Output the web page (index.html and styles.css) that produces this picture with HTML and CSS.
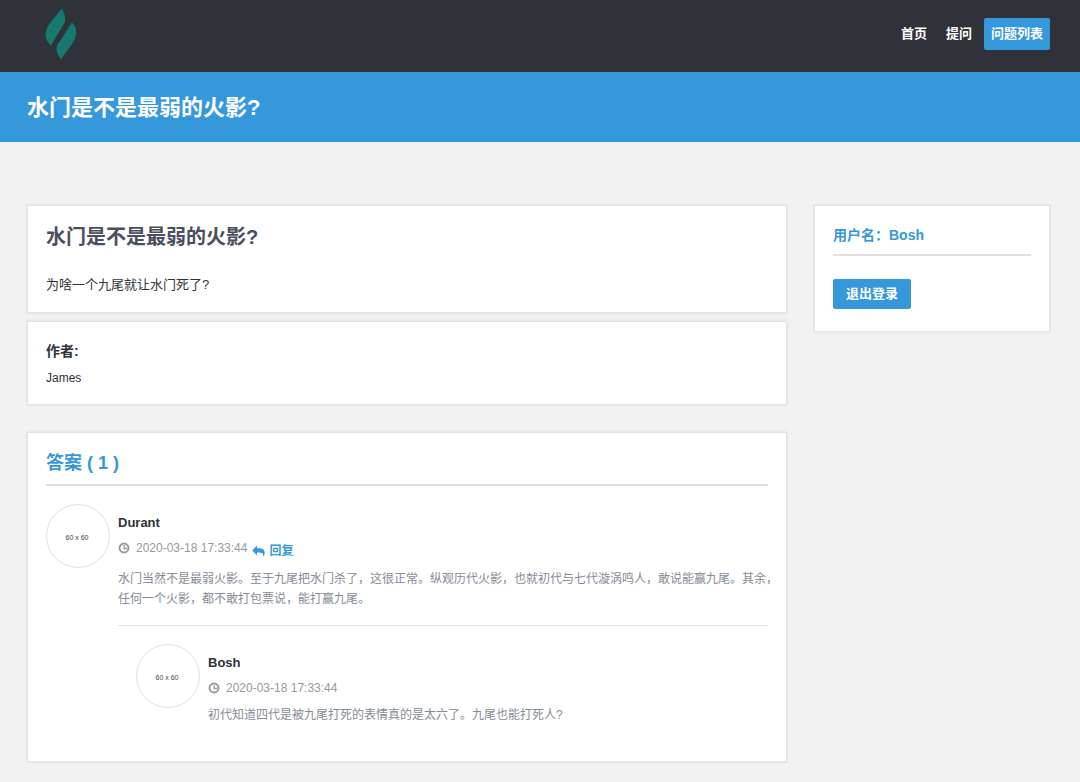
FILE: index.html
```html
<!DOCTYPE html>
<html lang="zh-CN">
<head>
<meta charset="utf-8">
<meta name="viewport" content="width=device-width, initial-scale=1">
<title>水门是不是最弱的火影?</title>
<link rel="stylesheet" href="styles.css">
</head>
<body>
<svg class="sprite" aria-hidden="true">
  <symbol id="clock" viewBox="0 0 12 12">
    <circle cx="6" cy="6" r="4.5" fill="none" stroke="currentColor" stroke-width="1.9"/>
    <path d="M6.200 3V6.500H9" fill="none" stroke="currentColor" stroke-width="1.3"/>
  </symbol>
  <symbol id="reply" viewBox="0 0 13 12">
    <path d="M5 .6v2.600h2.200c3.600 0 5.500 1.900 5.500 4.700 0 1.200-.5 2.400-1 3.200-.2.300-.6.200-.5-.2.300-2.300-.9-3.300-3.900-3.300H5v2.800L.2 5.400z" fill="currentColor"/>
  </symbol>
</svg>
<header class="header">
  <a class="logo" href="#" aria-label="首页">
    <svg viewBox="0 0 32 52" width="32" height="52" aria-hidden="true">
      <path d="M16.700 .5C19 4 21 9 20 14L6 37.500C2 34 0 30 .5 25C1 21 3 18 5 15Z" fill="#16786f"/>
      <path d="M27 14.500C30 17 31.500 21 31 26C30.500 30 29 33 27 36L16 51.500C13 48 11 43 11.700 38Z" fill="#16786f"/>
    </svg>
  </a>
  <nav class="nav">
    <a class="nav-link" href="#">首页</a>
    <a class="nav-link" href="#">提问</a>
    <a class="nav-link active" href="#">问题列表</a>
  </nav>
</header>
<div class="banner"><h1 class="banner-title">水门是不是最弱的火影?</h1></div>
<div class="page">
  <main class="main">
    <article class="card question">
      <h2 class="question-title">水门是不是最弱的火影?</h2>
      <p class="question-text">为啥一个九尾就让水门死了?</p>
    </article>
    <section class="card author">
      <h3 class="author-label">作者:</h3>
      <p class="author-name">James</p>
    </section>
    <section class="card answers">
      <h2 class="answers-title">答案 ( 1 )</h2>
      <article class="comment">
        <div class="avatar">60 x 60</div>
        <div class="comment-body">
          <h4 class="name">Durant</h4>
          <div class="meta">
            <svg class="clock"><use href="#clock"/></svg>
            <time>2020-03-18 17:33:44</time>
            <a class="reply" href="#"><svg class="reply-icon"><use href="#reply"/></svg>回复</a>
          </div>
          <p class="text">水门当然不是最弱火影。至于九尾把水门杀了，这很正常。纵观历代火影，也就初代与七代漩涡鸣人，敢说能赢九尾。其余，任何一个火影，都不敢打包票说，能打赢九尾。</p>
          <article class="comment nested">
            <div class="avatar">60 x 60</div>
            <div class="comment-body">
              <h4 class="name">Bosh</h4>
              <div class="meta">
                <svg class="clock"><use href="#clock"/></svg>
                <time>2020-03-18 17:33:44</time>
              </div>
              <p class="text">初代知道四代是被九尾打死的表情真的是太六了。九尾也能打死人?</p>
            </div>
          </article>
        </div>
      </article>
    </section>
  </main>
  <aside class="card side">
    <h2 class="side-title">用户名：Bosh</h2>
    <button class="logout" type="button">退出登录</button>
  </aside>
</div>
</body>
</html>
```
FILE: styles.css
```css
* { box-sizing: border-box; }
body {
  margin: 0;
  background: #f2f2f2;
  color: #2f3239;
  font-family: "Liberation Sans", "Noto Sans CJK SC", sans-serif;
  font-size: 12px;
  line-height: 20px;
}
h1, h2, h3, h4, p { margin: 0; }
a { text-decoration: none; }
.sprite { position: absolute; width: 0; height: 0; }

.header {
  display: flex;
  justify-content: space-between;
  align-items: flex-start;
  height: 72px;
  padding: 8px 30px 0 45px;
  background: #2f3239;
}
.logo svg { display: block; }
.nav { display: flex; gap: 5px; padding-top: 10px; }
.nav-link {
  padding: 6px 7px;
  border-radius: 2px;
  color: #fff;
  font-size: 13px;
  font-weight: bold;
}
.nav-link.active { background: #3498db; }

.banner { padding: 21px 27px 19px; background: #3498db; }
.banner-title { color: #fff; font-size: 22px; line-height: 30px; }

.page {
  display: grid;
  grid-template-columns: minmax(0, 1fr) 236px;
  align-items: start;
  gap: 27px;
  padding: 63px 30px 20px 27px;
}
.card {
  padding: 0 18px;
  background: #fff;
  border: 1px solid #e2e2e2;
  box-shadow: 0 0 3px rgba(0, 0, 0, .1);
}
.question { padding-top: 16px; padding-bottom: 17px; }
.question-title { color: #4a4f5f; font-size: 20px; line-height: 30px; }
.question-text { margin-top: 23px; font-size: 13px; }
.author { margin-top: 8px; padding-top: 18px; padding-bottom: 16px; }
.author-label { font-size: 14px; line-height: 22px; }
.author-name { margin-top: 6px; }
.answers { margin-top: 27px; padding-top: 18px; padding-bottom: 36px; }
.answers-title {
  padding-bottom: 9px;
  border-bottom: 2px solid #dedede;
  color: #3498db;
  font-size: 18px;
  line-height: 24px;
}

.comment { display: flex; gap: 8px; margin-top: 18px; }
.avatar {
  flex: none;
  display: grid;
  place-items: center;
  width: 64px;
  height: 64px;
  padding-right: 2px;
  padding-top: 3px;
  border: 1px solid #e0e0e0;
  border-radius: 50%;
  color: #444;
  font-size: 7px;
  line-height: 8px;
}
.comment-body { flex: 1; min-width: 0; padding-top: 9px; }
.name { font-size: 13px; }
.meta {
  display: flex;
  align-items: center;
  height: 20px;
  margin-top: 5px;
  color: #999;
}
.clock { width: 12px; height: 12px; margin-right: 6px; }
.reply {
  display: flex;
  align-items: center;
  gap: 4px;
  height: 20px;
  margin: 6px 0 0 5px;
  color: #3498db;
  font-weight: bold;
}
.reply-icon { width: 13px; height: 12px; }
.text { margin: 11px -12px 0 0; color: #858a96; }
.nested .text { margin-top: 7px; }
.nested {
  margin-top: 16px;
  padding: 18px 0 0 18px;
  border-top: 1px solid #e2e2e2;
}

.side { padding-top: 18px; padding-bottom: 22px; }
.side-title {
  padding-bottom: 8px;
  border-bottom: 2px solid #dedede;
  color: #3498db;
  font-size: 14px;
  line-height: 22px;
}
.logout {
  margin-top: 23px;
  padding: 5px 13px;
  border: 0;
  border-radius: 2px;
  background: #3498db;
  color: #fff;
  font: bold 13px/20px "Liberation Sans", "Noto Sans CJK SC", sans-serif;
}
```
